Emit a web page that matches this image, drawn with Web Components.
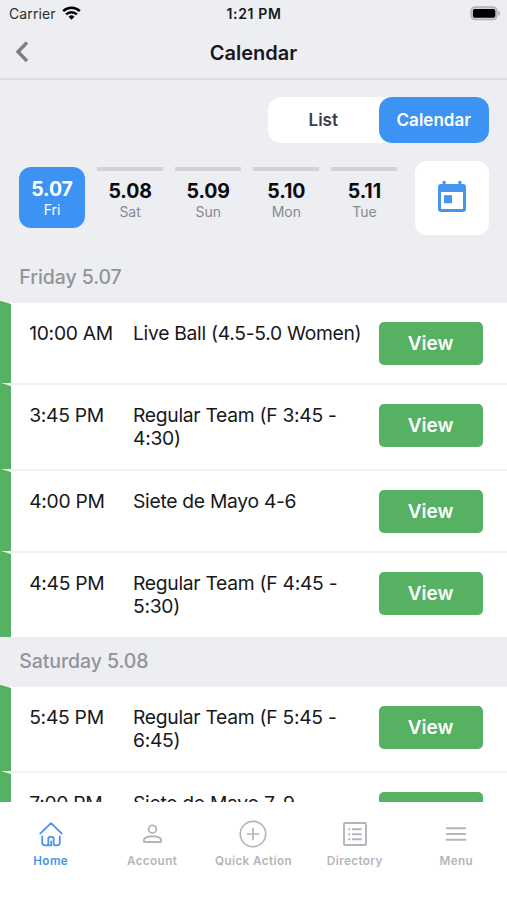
<!DOCTYPE html>
<html lang="en">
<head>
<meta charset="utf-8">
<title>Calendar</title>
<style>
html,body{margin:0;height:900px;overflow:hidden;background:#edeef2}
body{font-family:Inter,"Liberation Sans",sans-serif;color:#17181c}
</style>
</head>
<body>
<calendar-app></calendar-app>
<script>
const define=(name,html,setup)=>customElements.define(name,class extends HTMLElement{
  constructor(){
    super();
    const root=this.attachShadow({mode:'open'});
    const t=document.createElement('template');
    t.innerHTML=html;
    root.append(t.content.cloneNode(true));
  }
  connectedCallback(){ if(setup) setup(this,this.shadowRoot); }
});

define('status-bar',`
<style>
:host{display:grid;grid-template-columns:1fr auto 1fr;align-items:center;height:28px;padding:0 7px 0 9px;box-sizing:border-box;font-size:14px;line-height:28px;color:#17181c}
.l{display:flex;align-items:center;gap:6px;letter-spacing:.12px;color:#2c2d31}
.l svg{margin-top:-2px}
.c{font-size:14px;font-weight:600;letter-spacing:.65px;margin-left:-1px}
.r{display:flex;justify-content:flex-end}
.r svg{margin-top:-1px;margin-right:-1px}
svg{display:block}
</style>
<div class="l"><span>Carrier</span>
<svg width="19" height="14" viewBox="0 0 19 14" fill="none" stroke="#000" stroke-width="2.5"><path d="M1.2 5.1a12 12 0 0 1 16.6 0"/><path d="M4.1 8.3a7.8 7.8 0 0 1 10.8 0"/><path d="M9.5 13.8 6.6 10.8a4.1 4.1 0 0 1 5.8 0z" fill="#000" stroke="none"/></svg></div>
<div class="c">1:21 PM</div>
<div class="r"><svg width="31" height="15" viewBox="0 0 31 15"><rect x="1" y="1" width="26" height="12.6" rx="4" fill="#d0d1d4" stroke="#b0b1b4" stroke-width="1.4"/><rect x="2.9" y="2.9" width="22.4" height="8.8" rx="1.8" fill="#000"/><path d="M28.3 4.8c2.4.8 2.4 4.2 0 5z" fill="#aaabae"/></svg></div>`);

define('nav-bar',`
<style>
:host{display:grid;grid-template-columns:60px 1fr 60px;align-items:center;height:52px;box-sizing:border-box;border-bottom:2px solid #dcdde1}
svg{display:block;margin:-2px 0 0 15px}
h1{margin:0;text-align:center;font-size:20px;font-weight:600;line-height:48px;letter-spacing:-.02px}
</style>
<svg width="14" height="22" viewBox="0 0 14 22" fill="none" stroke="#7d7e81" stroke-width="3.4"><path d="M12 1.5 3 10.7l9 9.3"/></svg>
<h1><slot></slot></h1>`);

define('view-switch',`
<style>
:host{display:flex;width:221px;height:46px;border-radius:13px;background:#fff;font-size:17px;font-weight:600;line-height:46px;text-align:center;color:#3a3c48}
span{width:110.5px}
.on{background:#3d93f3;color:#fff;border-radius:13px}
</style>
<span>List</span><span class="on">Calendar</span>`);

define('day-tab',`
<style>
:host{display:block;width:66px;height:61px;box-sizing:border-box;border-top:4px solid #d2d3d7;text-align:center;padding-top:9px}
b{display:block;font-size:19.5px;line-height:22px;font-weight:700;color:#0b0b0d;letter-spacing:-.1px}
span{display:block;font-size:14px;line-height:20px;color:#88898e}
:host([selected]){background:#3d93f3;border:0;border-radius:12px;padding-top:11px}
:host([selected]) b,:host([selected]) span{color:#fff}
</style>
<b><slot></slot></b><span></span>`,(h,r)=>{r.querySelector('span').textContent=h.getAttribute('day')});

define('date-button',`
<style>
:host{display:grid;place-items:center;width:74px;height:74px;border-radius:12px;background:#fff}
svg{display:block;margin-top:-3px}
</style>
<svg width="28" height="31" viewBox="0 0 28 31"><path fill="#4595ee" fill-rule="evenodd" d="M4.6 0h3v3h12.8V0h3v3H25q3 0 3 3v22q0 3-3 3H3q-3 0-3-3V6q0-3 3-3h1.6zM3 11v16.5q0 .5.5.5h21q.5 0 .5-.5V11z"/><rect x="6" y="14.2" width="8" height="8" fill="#4595ee"/></svg>`);

define('section-title',`
<style>
:host{display:block;box-sizing:border-box;height:49px;padding:0 19.3px;font-size:19.5px;line-height:48px;font-weight:500;color:#929498;letter-spacing:-.08px}
</style><slot></slot>`);

define('event-row',`
<style>
:host{display:grid;grid-template-columns:11px 104px 1fr 104px;height:82px;box-sizing:border-box;background:#fff;border-top:1px solid #f1f2f3;border-bottom:1px solid #f1f2f3;padding-right:24.5px;font-size:19.3px;line-height:23.4px;letter-spacing:-.29px}
:host([tall]){height:86px}
:host([last]){height:85px;border-bottom:0}
i{background:#56b163;margin:-2px 0 0;clip-path:polygon(0 0,1px 0,11px 3px,11px 100%,0 100%)}
time{padding:19px 0 0 18.2px;white-space:nowrap}
p{margin:0;padding:19px 0 0 18px;white-space:pre}
button{margin:18.5px 0 0;width:104px;height:43px;border:0;border-radius:5px;background:#56b163;color:#fff;font:600 19px/43px Inter,"Liberation Sans",sans-serif;padding:0}
</style>
<i></i><time></time><p><slot></slot></p><button>View</button>`,(h,r)=>{r.querySelector('time').textContent=h.getAttribute('time')});

define('tab-item',`
<style>
:host{display:flex;flex-direction:column;align-items:center;width:101.4px;color:#b3b6bb;font-size:11.7px;font-weight:600;line-height:16px;letter-spacing:.4px;white-space:nowrap}
:host([active]){color:#4595ee}
.icon{height:35px;display:grid;place-items:center;margin-bottom:2px}
</style>
<div class="icon"><slot name="icon"></slot></div><span><slot></slot></span>`);

define('tab-bar',`
<style>
:host{display:flex;height:98px;box-sizing:border-box;padding-top:14px;background:#fff}
svg{display:block;fill:none;stroke:currentColor}
</style>
<tab-item active><svg slot="icon" width="26" height="26" viewBox="0 0 26 26" stroke-width="1.8" stroke-linecap="round" stroke-linejoin="round"><path d="M2.2 12.6 13 2.2l10.8 10.4M4.2 15.5v6q0 2.8 2.8 2.8h1.7q1.6 0 1.6-1.6v-5q0-1.9 1.9-1.9h1.6q1.9 0 1.9 1.9v5q0 1.6 1.6 1.6H19q2.8 0 2.8-2.8v-6M10.3 24.3h2.9v-4"/></svg>Home</tab-item>
<tab-item><svg slot="icon" width="20" height="20" viewBox="0 0 20 20" stroke-width="1.9"><circle cx="10.5" cy="5.2" r="3.8"/><path d="M2 18v-2.1c0-2.4 4.6-3.7 8.5-3.7s8.5 1.3 8.5 3.7V18z" stroke-linejoin="round"/></svg>Account</tab-item>
<tab-item><svg slot="icon" width="28" height="28" viewBox="0 0 28 28" stroke-width="1.7"><circle cx="14" cy="14" r="12.7"/><path d="M14 7.8v12.4M7.8 14h12.4"/></svg>Quick Action</tab-item>
<tab-item><svg slot="icon" width="24" height="24" viewBox="0 0 24 24" stroke-width="1.9"><rect x="1" y="1" width="22" height="22" rx="1"/><path d="M5.3 7.3h2M9 7.3h9.8M5.3 12.2h2M9 12.2h9.8M5.3 17.2h2M9 17.2h9.8"/></svg>Directory</tab-item>
<tab-item><svg slot="icon" width="22" height="16" viewBox="0 0 22 16" stroke-width="2.1" stroke-linecap="round"><path d="M1.8 2.2h18.4M1.8 8h18.4M1.8 13.8h18.4"/></svg>Menu</tab-item>`);

define('calendar-app',`
<style>
:host{display:flex;flex-direction:column;width:507px;height:900px;background:#edeef2;overflow:hidden}
.switch{display:flex;justify-content:flex-end;padding:17px 18px 0 0}
.days{display:flex;height:74px;padding:18px 18px 0 19px;justify-content:space-between}
.tabs{display:flex;gap:12.1px;padding-top:6px}
.list{flex:1;min-height:0;overflow:hidden;padding-top:18px}
tab-bar{flex:none}
</style>
<status-bar></status-bar>
<nav-bar>Calendar</nav-bar>
<div class="switch"><view-switch></view-switch></div>
<div class="days"><div class="tabs">
<day-tab selected day="Fri">5.07</day-tab><day-tab day="Sat">5.08</day-tab><day-tab day="Sun">5.09</day-tab><day-tab day="Mon">5.10</day-tab><day-tab day="Tue">5.11</day-tab>
</div><date-button></date-button></div>
<div class="list">
<section-title>Friday 5.07</section-title>
<event-row time="10:00 AM">Live Ball (4.5-5.0 Women)</event-row>
<event-row tall time="3:45 PM">Regular Team (F 3:45 -
4:30)</event-row>
<event-row time="4:00 PM">Siete de Mayo 4-6</event-row>
<event-row last time="4:45 PM">Regular Team (F 4:45 -
5:30)</event-row>
<section-title>Saturday 5.08</section-title>
<event-row tall time="5:45 PM">Regular Team (F 5:45 -
6:45)</event-row>
<event-row time="7:00 PM">Siete de Mayo 7-9</event-row>
</div>
<tab-bar></tab-bar>`);
</script>
</body>
</html>
